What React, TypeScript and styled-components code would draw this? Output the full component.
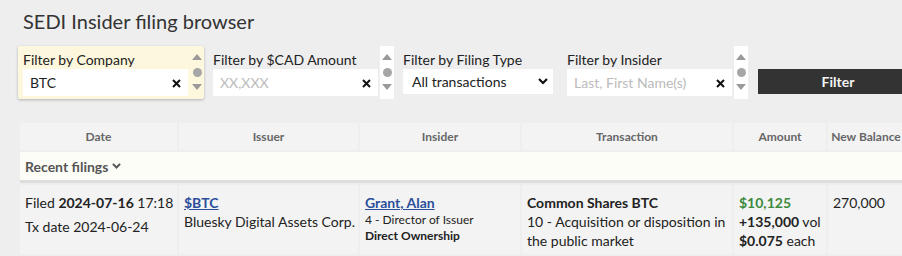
import React from "react"
import styled, { createGlobalStyle } from "styled-components"

const GlobalStyle = createGlobalStyle`
  html, body {
    margin: 0;
    padding: 0;
    background: #eeeeee;
    overflow: hidden;
  }
  body {
    font-family: Lato, "Liberation Sans", sans-serif;
    color: #222;
  }
`

const Page = styled.div`
  width: 902px;
  height: 256px;
  padding: 8px 0 0 18px;
  box-sizing: border-box;
  overflow: hidden;
`

const Title = styled.h1`
  margin: 0 0 0 5px;
  font-size: 20px;
  font-weight: 400;
  line-height: 26px;
  color: #333;
`

const FilterBar = styled.div`
  display: flex;
  align-items: stretch;
  gap: 4px;
  margin-top: 12px;
  width: 900px;
`

const Group = styled.div<{ $active?: boolean; $padRight?: number }>`
  display: flex;
  align-items: stretch;
  gap: 2px;
  padding-left: 5px;
  padding-right: ${(p) => p.$padRight ?? 0}px;
  background: ${(p) => (p.$active ? "#fdf8dd" : "transparent")};
  box-shadow: ${(p) => (p.$active ? "0 1px 3px rgba(0,0,0,0.25)" : "none")};
  border-radius: 2px;
`

const Field = styled.div`
  display: flex;
  flex-direction: column;
  padding: 5px 0 3px;
`

const Label = styled.label`
  font-size: 14px;
  line-height: 18px;
  color: #222;
`

const InputWrap = styled.div<{ $w: number }>`
  position: relative;
  width: ${(p) => p.$w}px;
  height: 27px;
  background: #fff;
  display: flex;
  align-items: center;
`

const TextInput = styled.input`
  border: none;
  outline: none;
  background: transparent;
  font-family: inherit;
  font-size: 14px;
  color: #222;
  padding: 0 0 0 7px;
  width: 100%;
  height: 100%;
  &::placeholder {
    color: #bbb;
  }
`

const Clear = styled.span`
  position: absolute;
  right: 7px;
  top: 10px;
  width: 9px;
  height: 9px;
  display: flex;
`

const Spinner = styled.div<{ $active?: boolean }>`
  width: 14px;
  background: ${(p) => (p.$active ? "transparent" : "#fff")};
  display: flex;
  flex-direction: column;
  align-items: center;
  justify-content: space-between;
  padding: 8px 0 9px;
`

const SelectWrap = styled.div`
  position: relative;
  width: 150px;
  height: 25px;
  background: #fff;
`

const Select = styled.select`
  appearance: none;
  border: none;
  outline: none;
  background: transparent;
  width: 100%;
  height: 100%;
  font-family: inherit;
  font-size: 14px;
  color: #222;
  padding: 0 0 0 9px;
`

const Chevron = styled.span`
  position: absolute;
  right: 5px;
  top: 9px;
  display: flex;
  pointer-events: none;
`

const FilterButton = styled.button`
  align-self: flex-start;
  margin: 23px 0 0 6px;
  flex: 1;
  height: 25px;
  background: #333;
  color: #f4f4f4;
  border: none;
  font-family: inherit;
  font-size: 14px;
  font-weight: 700;
  padding: 0;
`

const Table = styled.table`
  margin-top: 22px;
  border-collapse: separate;
  border-spacing: 2px;
  table-layout: fixed;
  width: 888px;
`

const Th = styled.th<{ $w: number }>`
  width: ${(p) => p.$w}px;
  height: 27px;
  padding: 0;
  background: #f3f3f3;
  font-size: 12px;
  font-weight: 700;
  color: #666;
  text-align: center;
  white-space: nowrap;
  overflow: visible;
`

const SectionCell = styled.td`
  height: 28px;
  background: #fdfdf8;
  border-bottom: 3px solid #dddddd;
  padding: 0 0 0 5px;
  font-size: 14px;
  font-weight: 700;
  color: #555;
`

const SectionInner = styled.span`
  display: inline-flex;
  align-items: center;
  gap: 4px;
`

const Td = styled.td`
  vertical-align: top;
  background: #f3f3f3;
  padding: 6px 5px 4px;
  font-size: 14px;
  line-height: 19px;
  color: #222;
  height: 57px;
  overflow: hidden;
`

const Line = styled.div<{ $gap?: number }>`
  margin-top: ${(p) => p.$gap ?? 0}px;
  white-space: nowrap;
`

const Link = styled.a`
  color: #2b4f9b;
  font-weight: 700;
  text-decoration: underline;
`

const Small = styled.div<{ $bold?: boolean }>`
  font-size: 12px;
  line-height: 16px;
  font-weight: ${(p) => (p.$bold ? 700 : 400)};
`

const Green = styled.span`
  color: #3d8a3d;
  font-weight: 700;
`

const XIcon = () => (
  <svg width="9" height="9" viewBox="0 0 9 9">
    <path d="M1 1L8 8M8 1L1 8" stroke="#111" strokeWidth="2" />
  </svg>
)

const SpinIcons = () => (
  <>
    <svg width="10" height="6" viewBox="0 0 10 6">
      <path d="M0 6L5 0L10 6Z" fill="#9a9a9a" />
    </svg>
    <svg width="9" height="9" viewBox="0 0 9 9">
      <circle cx="4.5" cy="4.5" r="4.5" fill="#a6a6a6" />
    </svg>
    <svg width="10" height="6" viewBox="0 0 10 6">
      <path d="M0 0L5 6L10 0Z" fill="#9a9a9a" />
    </svg>
  </>
)

const ChevronDown = ({ size = 10, color = "#111" }: { size?: number; color?: string }) => (
  <svg width={size} height={size * 0.65} viewBox="0 0 10 6.5">
    <path d="M1 1L5 5L9 1" stroke={color} strokeWidth="2.2" fill="none" />
  </svg>
)

const App: React.FC = () => {
  return (
    <Page>
      <GlobalStyle />
      <Title>SEDI Insider filing browser</Title>
      <FilterBar>
        <Group $active>
          <Field>
            <Label>Filter by Company</Label>
            <InputWrap $w={165}>
              <TextInput defaultValue="BTC" />
              <Clear>
                <XIcon />
              </Clear>
            </InputWrap>
          </Field>
          <Spinner $active>
            <SpinIcons />
          </Spinner>
        </Group>
        <Group>
          <Field>
            <Label>Filter by $CAD Amount</Label>
            <InputWrap $w={165}>
              <TextInput placeholder="XX,XXX" />
              <Clear>
                <XIcon />
              </Clear>
            </InputWrap>
          </Field>
          <Spinner>
            <SpinIcons />
          </Spinner>
        </Group>
        <Group $padRight={5}>
          <Field>
            <Label>Filter by Filing Type</Label>
            <SelectWrap>
              <Select defaultValue="all">
                <option value="all">All transactions</option>
              </Select>
              <Chevron>
                <ChevronDown />
              </Chevron>
            </SelectWrap>
          </Field>
        </Group>
        <Group>
          <Field>
            <Label>Filter by Insider</Label>
            <InputWrap $w={165}>
              <TextInput placeholder="Last, First Name(s)" />
              <Clear>
                <XIcon />
              </Clear>
            </InputWrap>
          </Field>
          <Spinner>
            <SpinIcons />
          </Spinner>
        </Group>
        <FilterButton>Filter</FilterButton>
      </FilterBar>
      <Table>
        <thead>
          <tr>
            <Th $w={157}>Date</Th>
            <Th $w={179}>Issuer</Th>
            <Th $w={160}>Insider</Th>
            <Th $w={210}>Transaction</Th>
            <Th $w={92}>Amount</Th>
            <Th $w={76}>New Balance</Th>
          </tr>
        </thead>
        <tbody>
          <tr>
            <SectionCell colSpan={6}>
              <SectionInner>
                Recent filings <ChevronDown size={9} color="#555" />
              </SectionInner>
            </SectionCell>
          </tr>
          <tr>
            <Td>
              <Line $gap={2}>
                Filed <b>2024-07-16</b> 17:18
              </Line>
              <Line $gap={5}>Tx date 2024-06-24</Line>
            </Td>
            <Td>
              <Line $gap={2}>
                <Link href="#">$BTC</Link>
              </Line>
              <Line>Bluesky Digital Assets Corp.</Line>
            </Td>
            <Td>
              <Line $gap={2}>
                <Link href="#">Grant, Alan</Link>
              </Line>
              <Small>4 - Director of Issuer</Small>
              <Small $bold>Direct Ownership</Small>
            </Td>
            <Td>
              <Line $gap={2}>
                <b>Common Shares BTC</b>
              </Line>
              <div>10 - Acquisition or disposition in the public market</div>
            </Td>
            <Td>
              <Line $gap={2}>
                <Green>$10,125</Green>
              </Line>
              <Line>
                <b>+135,000</b> vol
              </Line>
              <Line>
                <b>$0.075</b> each
              </Line>
            </Td>
            <Td>
              <Line $gap={2}>270,000</Line>
            </Td>
          </tr>
        </tbody>
      </Table>
    </Page>
  )
}

export default App
